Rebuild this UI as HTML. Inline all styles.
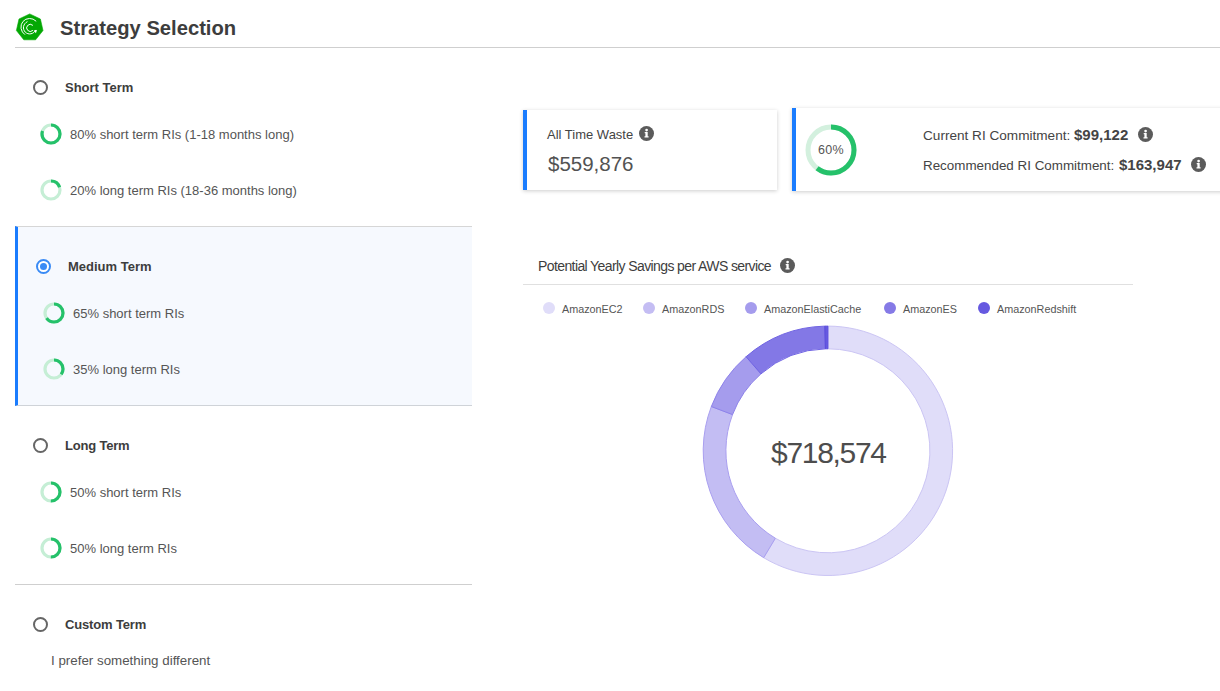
<!DOCTYPE html>
<html><head><meta charset="utf-8">
<style>
*{box-sizing:border-box;margin:0;padding:0}
html,body{width:1220px;height:691px;overflow:hidden;background:#fff}
body{font-family:"Liberation Sans",sans-serif;color:#444;position:relative}
.abs{position:absolute;white-space:nowrap}
.title{left:60px;top:15px;font-size:20.2px;font-weight:700;color:#3d3d3d;line-height:26px}
.hline{position:absolute;height:1px;background:#cfcfcf}
.radio{position:absolute;width:15px;height:15px;border-radius:50%;border:2px solid #666;background:#fff}
.radio.sel{border-color:#3a8bf5}
.radio.sel::after{content:"";position:absolute;left:2px;top:2px;width:7px;height:7px;border-radius:50%;background:#3a8bf5}
.lbl{font-size:13px;font-weight:700;color:#3d3d3d;line-height:16px}
.item{font-size:13px;color:#555;line-height:16px}
.ring{position:absolute;width:22px;height:22px}
.medbox{position:absolute;left:15px;top:226px;width:457px;height:180px;background:#f6f9fe;border-top:1px solid #d6d6d6;border-bottom:1px solid #cfd3d8;border-left:3px solid #1a7cfe}
.card{position:absolute;background:#fff;box-shadow:0 1px 4px rgba(0,0,0,0.2)}
.bar{position:absolute;left:0;top:0;bottom:0;width:4px;background:#1a7cfe}
.info{position:absolute;width:15px;height:15px}
.leg{font-size:10.8px;color:#555;line-height:14px}
.dot{position:absolute;width:12px;height:12px;border-radius:50%}
</style></head><body>

<!-- logo -->
<svg class="abs" style="left:0;top:0" width="60" height="50" viewBox="0 0 60 50">
  <polygon points="29.7,13.9 40.4,19.0 43.0,30.5 35.6,39.8 23.8,39.8 16.4,30.5 19.0,19.0" fill="#04a804" stroke="#04a804" stroke-width="0.6" stroke-linejoin="round"/>
  <g fill="none" stroke="#fff" stroke-width="1" stroke-linecap="round">
    <path d="M24.65,34.41 A8.8,8.8 0 1 1 35.92,20.98"/>
    <path d="M27.10,21.80 A6.4,6.4 0 1 0 35.60,30.30"/>
    <path d="M32.61,25.14 A3.6,3.6 0 1 0 32.61,30.66"/>
  </g>
  <path d="M37.0,30.0 L33.6,30.6 L35.9,33.3 Z" fill="#fff"/>
</svg>
<div class="abs title">Strategy Selection</div>
<div class="hline" style="left:15px;top:47px;width:1205px"></div>

<!-- Short term -->
<div class="radio" style="left:33px;top:80px"></div>
<div class="abs lbl" style="left:65px;top:80px">Short Term</div>
<svg class="ring" style="left:40px;top:123px" viewBox="0 0 22 22"><circle cx="11" cy="11" r="9" fill="none" stroke="#c5eed5" stroke-width="3.2"/><circle cx="11" cy="11" r="9" fill="none" stroke="#25c16a" stroke-width="3.2" stroke-dasharray="45.24 100" transform="rotate(-90 11 11)"/></svg>
<div class="abs item" style="left:70px;top:127px">80% short term RIs (1-18 months long)</div>
<svg class="ring" style="left:40px;top:179px" viewBox="0 0 22 22"><circle cx="11" cy="11" r="9" fill="none" stroke="#c5eed5" stroke-width="3.2"/><circle cx="11" cy="11" r="9" fill="none" stroke="#25c16a" stroke-width="3.2" stroke-dasharray="11.31 100" transform="rotate(-90 11 11)"/></svg>
<div class="abs item" style="left:70px;top:183px">20% long term RIs (18-36 months long)</div>

<!-- Medium term -->
<div class="medbox"></div>
<div class="radio sel" style="left:36px;top:259px"></div>
<div class="abs lbl" style="left:68px;top:259px">Medium Term</div>
<svg class="ring" style="left:43px;top:302px" viewBox="0 0 22 22"><circle cx="11" cy="11" r="9" fill="none" stroke="#c5eed5" stroke-width="3.2"/><circle cx="11" cy="11" r="9" fill="none" stroke="#25c16a" stroke-width="3.2" stroke-dasharray="36.76 100" transform="rotate(-90 11 11)"/></svg>
<div class="abs item" style="left:73px;top:306px">65% short term RIs</div>
<svg class="ring" style="left:43px;top:358px" viewBox="0 0 22 22"><circle cx="11" cy="11" r="9" fill="none" stroke="#c5eed5" stroke-width="3.2"/><circle cx="11" cy="11" r="9" fill="none" stroke="#25c16a" stroke-width="3.2" stroke-dasharray="19.79 100" transform="rotate(-90 11 11)"/></svg>
<div class="abs item" style="left:73px;top:362px">35% long term RIs</div>

<!-- Long term -->
<div class="radio" style="left:33px;top:438px"></div>
<div class="abs lbl" style="left:65px;top:438px;letter-spacing:-0.2px">Long Term</div>
<svg class="ring" style="left:40px;top:481px" viewBox="0 0 22 22"><circle cx="11" cy="11" r="9" fill="none" stroke="#c5eed5" stroke-width="3.2"/><circle cx="11" cy="11" r="9" fill="none" stroke="#25c16a" stroke-width="3.2" stroke-dasharray="28.27 100" transform="rotate(-90 11 11)"/></svg>
<div class="abs item" style="left:70px;top:485px">50% short term RIs</div>
<svg class="ring" style="left:40px;top:537px" viewBox="0 0 22 22"><circle cx="11" cy="11" r="9" fill="none" stroke="#c5eed5" stroke-width="3.2"/><circle cx="11" cy="11" r="9" fill="none" stroke="#25c16a" stroke-width="3.2" stroke-dasharray="28.27 100" transform="rotate(-90 11 11)"/></svg>
<div class="abs item" style="left:70px;top:541px">50% long term RIs</div>

<div class="hline" style="left:15px;top:584px;width:457px"></div>

<!-- Custom term -->
<div class="radio" style="left:33px;top:617px"></div>
<div class="abs lbl" style="left:65px;top:617px;letter-spacing:-0.15px">Custom Term</div>
<div class="abs item" style="left:51px;top:653px;font-size:13.35px">I prefer something different</div>

<!-- Card 1 -->
<div class="card" style="left:523px;top:110px;width:254px;height:80px"><div class="bar"></div></div>
<div class="abs item" style="left:547px;top:127px;font-size:13px;color:#444">All Time Waste</div>
<svg class="info" style="left:639px;top:126px" viewBox="0 0 15 15"><circle cx="7.5" cy="7.5" r="7.5" fill="#5b5b5b"/><circle cx="7.6" cy="4.1" r="1.35" fill="#fff"/><path d="M5.7,6.1 H8.7 V10.3 H9.6 V11.6 H5.5 V10.3 H6.4 V7.2 H5.7 Z" fill="#fff"/></svg>
<div class="abs" style="left:548px;top:151.5px;font-size:20.5px;color:#525252;line-height:24px">$559,876</div>

<!-- Card 2 -->
<div class="card" style="left:792px;top:108px;width:440px;height:83px"><div class="bar"></div></div>
<svg class="abs" style="left:805px;top:124px" width="52" height="52" viewBox="0 0 52 52"><circle cx="26" cy="26" r="23" fill="none" stroke="#d3f0de" stroke-width="5"/><circle cx="26" cy="26" r="23" fill="none" stroke="#25c16a" stroke-width="5" stroke-dasharray="86.7 200" transform="rotate(-90 26 26)"/></svg>
<div class="abs" style="left:818px;top:142px;font-size:12.5px;letter-spacing:0.3px;color:#555;line-height:16px">60%</div>
<div class="abs item" style="left:923px;top:128px;color:#444;font-size:13.6px">Current RI Commitment:</div>
<div class="abs" style="left:1074px;top:127px;font-size:15px;font-weight:700;color:#444;line-height:16px">$99,122</div>
<svg class="info" style="left:1138px;top:127px" viewBox="0 0 15 15"><circle cx="7.5" cy="7.5" r="7.5" fill="#5b5b5b"/><circle cx="7.6" cy="4.1" r="1.35" fill="#fff"/><path d="M5.7,6.1 H8.7 V10.3 H9.6 V11.6 H5.5 V10.3 H6.4 V7.2 H5.7 Z" fill="#fff"/></svg>
<div class="abs item" style="left:923px;top:158px;color:#444;font-size:13.4px">Recommended RI Commitment:</div>
<div class="abs" style="left:1119px;top:157px;font-size:15px;font-weight:700;color:#444;line-height:16px">$163,947</div>
<svg class="info" style="left:1191px;top:157px" viewBox="0 0 15 15"><circle cx="7.5" cy="7.5" r="7.5" fill="#5b5b5b"/><circle cx="7.6" cy="4.1" r="1.35" fill="#fff"/><path d="M5.7,6.1 H8.7 V10.3 H9.6 V11.6 H5.5 V10.3 H6.4 V7.2 H5.7 Z" fill="#fff"/></svg>

<!-- Chart -->
<div class="abs" style="left:538px;top:257.5px;font-size:14px;letter-spacing:-0.6px;color:#3d3d3d;line-height:16px">Potential Yearly Savings per AWS service</div>
<svg class="info" style="left:780px;top:258px" viewBox="0 0 15 15"><circle cx="7.5" cy="7.5" r="7.5" fill="#5b5b5b"/><circle cx="7.6" cy="4.1" r="1.35" fill="#fff"/><path d="M5.7,6.1 H8.7 V10.3 H9.6 V11.6 H5.5 V10.3 H6.4 V7.2 H5.7 Z" fill="#fff"/></svg>
<div class="hline" style="left:523px;top:284px;width:610px;background:#e0e0e0"></div>

<div class="dot" style="left:543px;top:302px;background:#e0ddf9"></div>
<div class="abs leg" style="left:562px;top:302px">AmazonEC2</div>
<div class="dot" style="left:643px;top:302px;background:#c4bdf3"></div>
<div class="abs leg" style="left:662px;top:302px">AmazonRDS</div>
<div class="dot" style="left:745px;top:302px;background:#a59ced"></div>
<div class="abs leg" style="left:764px;top:302px">AmazonElastiCache</div>
<div class="dot" style="left:884px;top:302px;background:#857ae6"></div>
<div class="abs leg" style="left:903px;top:302px">AmazonES</div>
<div class="dot" style="left:978px;top:302px;background:#6659e0"></div>
<div class="abs leg" style="left:997px;top:302px">AmazonRedshift</div>

<svg id="donut" class="abs" style="left:0;top:0" width="1220" height="691"><path d="M827.90,326.10 A124.7,124.7 0 1 1 763.67,557.69 L775.37,538.23 A102.0,102.0 0 1 0 827.90,348.80 Z" fill="#e0ddf9" stroke="#cbc5f4" stroke-width="1"/><path d="M763.67,557.69 A124.7,124.7 0 0 1 711.33,406.52 L732.55,414.58 A102.0,102.0 0 0 0 775.37,538.23 Z" fill="#c3bdf3" stroke="#a99ff0" stroke-width="1"/><path d="M711.33,406.52 A124.7,124.7 0 0 1 746.09,356.69 L760.98,373.82 A102.0,102.0 0 0 0 732.55,414.58 Z" fill="#a59ced" stroke="#8d82ea" stroke-width="1"/><path d="M746.09,356.69 A124.7,124.7 0 0 1 824.85,326.14 L825.41,348.83 A102.0,102.0 0 0 0 760.98,373.82 Z" fill="#8378e6" stroke="#7064e3" stroke-width="1"/><path d="M824.85,326.14 A124.7,124.7 0 0 1 827.90,326.10 L827.90,348.80 A102.0,102.0 0 0 0 825.41,348.83 Z" fill="#6659e0" stroke="#5a4cdd" stroke-width="1"/></svg>
<div class="abs" style="left:771px;top:436px;font-size:30px;letter-spacing:-1.3px;color:#4d4d4d;line-height:34px">$718,574</div>

</body></html>
